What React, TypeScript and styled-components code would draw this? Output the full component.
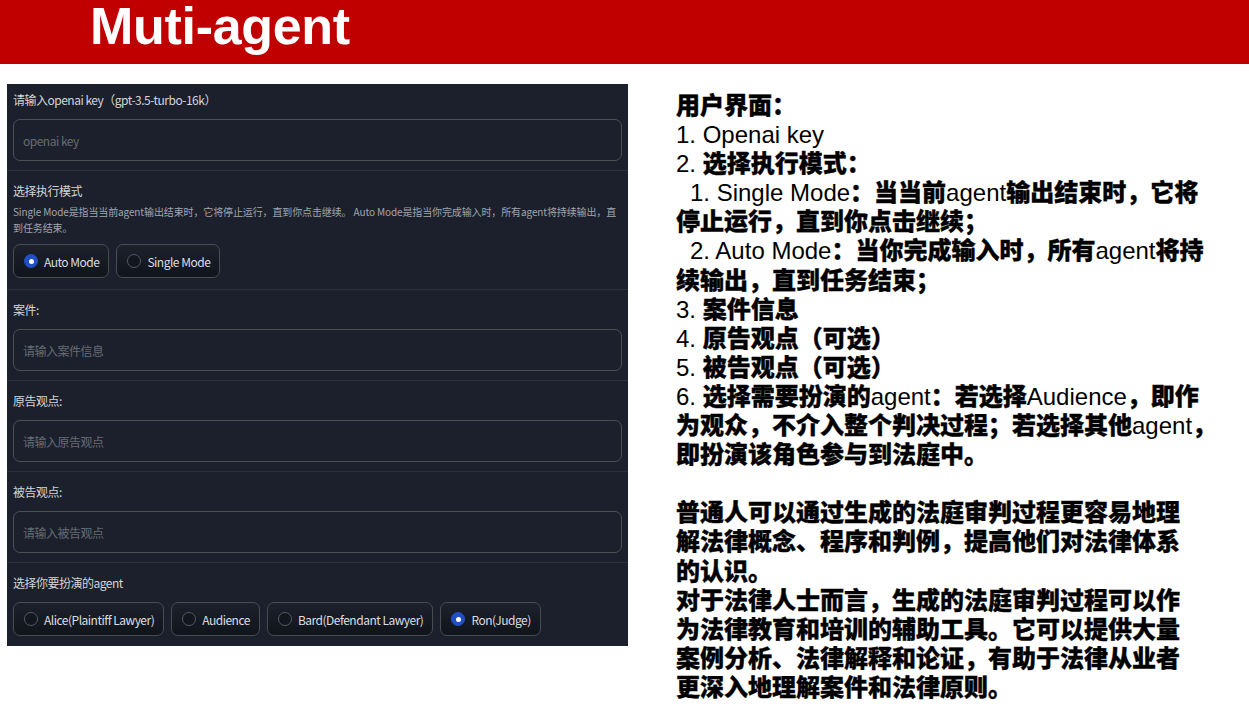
import React from "react";
import styled, { createGlobalStyle } from "styled-components";

const GlobalStyle = createGlobalStyle`
  html, body { margin: 0; padding: 0; background: #ffffff; }
  * { box-sizing: border-box; }
`;

const Page = styled.div`
  width: 1249px;
  height: 710px;
  overflow: hidden;
  background: #ffffff;
`;

const Header = styled.header`
  height: 64px;
  background: #c00000;
  padding-left: 90px;
  display: flex;
  align-items: flex-start;
`;

const Title = styled.h1`
  margin: 0;
  font-family: "Liberation Sans", Arial, sans-serif;
  font-weight: 700;
  font-size: 52px;
  line-height: 52px;
  color: #ffffff;
  letter-spacing: -0.3px;
`;

const Content = styled.main`
  display: flex;
  align-items: flex-start;
  padding: 20px 0 0 7px;
`;

const Panel = styled.section`
  width: 621px;
  height: 562px;
  background: #1b202c;
  display: flex;
  flex-direction: column;
  font-family: "Noto Sans CJK SC", "Source Sans Pro", sans-serif;
  letter-spacing: -0.5px;
`;

const Block = styled.div<{ $first?: boolean; $last?: boolean; $pb?: number }>`
  padding: ${(p) => (p.$first ? "6px" : "10px")} 6px ${(p) => p.$pb ?? 9}px;
  border-bottom: ${(p) => (p.$last ? "none" : "1px solid #2a303c")};
`;

const Label = styled.div`
  height: 20px;
  line-height: 20px;
  font-size: 12px;
  color: #d3d5d9;
  white-space: nowrap;
  margin-bottom: 9px;
`;

const Desc = styled.div`
  font-size: 10px;
  line-height: 16px;
  color: #a2a6ae;
  margin: -6px 0 8px;
  white-space: nowrap;
  letter-spacing: -0.12px;
`;

const Input = styled.div`
  height: 42px;
  border: 1px solid #4d4f55;
  border-radius: 7px;
  padding: 0 9px;
  display: flex;
  align-items: center;
  font-size: 12px;
  color: #676b73;
`;

const RadioRow = styled.div`
  display: flex;
  gap: 7px;
`;

const RadioButton = styled.div`
  height: 34px;
  display: flex;
  align-items: center;
  gap: 6px;
  padding: 0 9px 0 10px;
  border: 1px solid #4a4c52;
  border-radius: 7px;
  background: linear-gradient(180deg, #1c212c 0%, #10141b 100%);
  font-size: 12px;
  color: #dcdee2;
  white-space: nowrap;
`;

const Dot = styled.span<{ $on?: boolean }>`
  width: 14px;
  height: 14px;
  border-radius: 50%;
  flex: none;
  position: relative;
  background: ${(p) => (p.$on ? "#2150c6" : "#12161e")};
  border: 1px solid ${(p) => (p.$on ? "#2150c6" : "#565960")};
  &::after {
    content: "";
    display: ${(p) => (p.$on ? "block" : "none")};
    position: absolute;
    left: 50%;
    top: 50%;
    width: 5px;
    height: 5px;
    margin: -2.5px 0 0 -2.5px;
    border-radius: 50%;
    background: #ffffff;
  }
`;

const Notes = styled.section`
  margin: 5px 0 0 48px;
  font-family: "Noto Sans CJK SC", sans-serif;
  font-weight: 900;
  font-size: 24px;
  line-height: 29.1px;
  color: #000000;
  -webkit-text-stroke: 0.35px #000000;
`;

const Line = styled.div<{ $indent?: boolean }>`
  height: 29.1px;
  line-height: 29.1px;
  white-space: nowrap;
  padding-left: ${(p) => (p.$indent ? "14px" : "0")};
`;

const L = styled.span`
  font-family: "Liberation Sans", Arial, sans-serif;
  font-weight: 400;
  font-size: 24px;
  line-height: 1;
  -webkit-text-stroke: 0;
`;

function Radio({ label, on }: { label: string; on?: boolean }) {
  return (
    <RadioButton>
      <Dot $on={on} />
      {label}
    </RadioButton>
  );
}

export default function App() {
  return (
    <Page>
      <GlobalStyle />
      <Header>
        <Title>Muti-agent</Title>
      </Header>
      <Content>
        <Panel>
          <Block $first>
            <Label>请输入openai key（gpt-3.5-turbo-16k）</Label>
            <Input>openai key</Input>
          </Block>
          <Block $pb={11}>
            <Label>选择执行模式</Label>
            <Desc>
              Single Mode是指当当前agent输出结束时，它将停止运行，直到你点击继续。 Auto Mode是指当你完成输入时，所有agent将持续输出，直
              <br />
              到任务结束。
            </Desc>
            <RadioRow>
              <Radio label="Auto Mode" on />
              <Radio label="Single Mode" />
            </RadioRow>
          </Block>
          <Block>
            <Label>案件:</Label>
            <Input>请输入案件信息</Input>
          </Block>
          <Block>
            <Label>原告观点:</Label>
            <Input>请输入原告观点</Input>
          </Block>
          <Block>
            <Label>被告观点:</Label>
            <Input>请输入被告观点</Input>
          </Block>
          <Block $last>
            <Label>选择你要扮演的agent</Label>
            <RadioRow>
              <Radio label="Alice(Plaintiff Lawyer)" />
              <Radio label="Audience" />
              <Radio label="Bard(Defendant Lawyer)" />
              <Radio label="Ron(Judge)" on />
            </RadioRow>
          </Block>
        </Panel>
        <Notes>
          <Line>用户界面：</Line>
          <Line><L>1. Openai key</L></Line>
          <Line><L>2. </L>选择执行模式：</Line>
          <Line $indent><L>1. Single Mode</L>：当当前<L>agent</L>输出结束时，它将</Line>
          <Line>停止运行，直到你点击继续；</Line>
          <Line $indent><L>2. Auto Mode</L>：当你完成输入时，所有<L>agent</L>将持</Line>
          <Line>续输出，直到任务结束；</Line>
          <Line><L>3. </L>案件信息</Line>
          <Line><L>4. </L>原告观点（可选）</Line>
          <Line><L>5. </L>被告观点（可选）</Line>
          <Line><L>6. </L>选择需要扮演的<L>agent</L>：若选择<L>Audience</L>，即作</Line>
          <Line>为观众，不介入整个判决过程；若选择其他<L>agent</L>，</Line>
          <Line>即扮演该角色参与到法庭中。</Line>
          <Line />
          <Line>普通人可以通过生成的法庭审判过程更容易地理</Line>
          <Line>解法律概念、程序和判例，提高他们对法律体系</Line>
          <Line>的认识。</Line>
          <Line>对于法律人士而言，生成的法庭审判过程可以作</Line>
          <Line>为法律教育和培训的辅助工具。它可以提供大量</Line>
          <Line>案例分析、法律解释和论证，有助于法律从业者</Line>
          <Line>更深入地理解案件和法律原则。</Line>
        </Notes>
      </Content>
    </Page>
  );
}
